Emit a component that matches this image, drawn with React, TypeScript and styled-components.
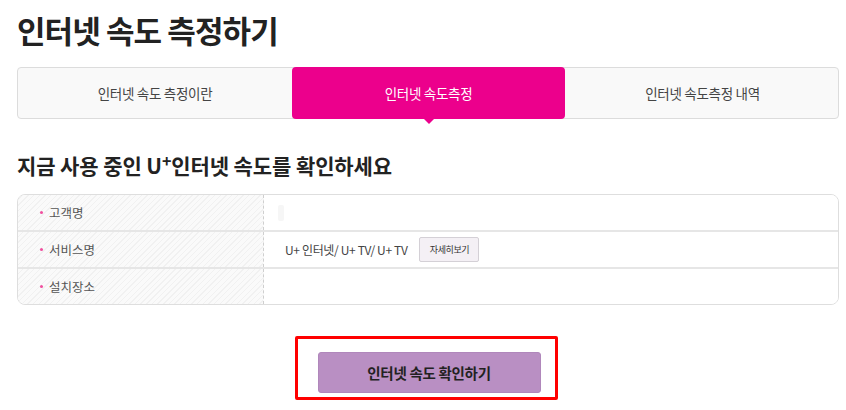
import React from 'react';
import styled, { createGlobalStyle } from 'styled-components';

const GlobalStyle = createGlobalStyle`
  html, body {
    margin: 0;
    padding: 0;
    background: #ffffff;
  }
  body {
    font-family: "Noto Sans CJK KR", "Noto Sans", sans-serif;
    color: #222;
  }
`;

const Page = styled.div`
  width: 822px;
  padding: 8px 7px 0 17px;
`;

const Title = styled.h1`
  margin: 0;
  font-size: 31px;
  line-height: 44px;
  font-weight: 700;
  color: #222;
  letter-spacing: -0.9px;
`;

const TabBar = styled.div`
  display: grid;
  grid-template-columns: 274px 273px 275px;
  margin-top: 15px;
  height: 52px;
  border: 1px solid #dcdcdc;
  border-radius: 4px;
  background: #f9f9f9;
  box-sizing: border-box;
`;

const Tab = styled.div<{ $active?: boolean }>`
  position: relative;
  display: flex;
  align-items: center;
  justify-content: center;
  font-size: 13.5px;
  color: ${(p) => (p.$active ? '#fff' : '#444')};
  background: ${(p) => (p.$active ? '#ec008c' : 'transparent')};
  border-radius: ${(p) => (p.$active ? '4px' : '0')};
  margin: ${(p) => (p.$active ? '-1px 0' : '0')};
  letter-spacing: -0.3px;

  &::after {
    content: '';
    display: ${(p) => (p.$active ? 'block' : 'none')};
    position: absolute;
    left: 50%;
    bottom: -5px;
    margin-left: -6px;
    border-left: 6px solid transparent;
    border-right: 6px solid transparent;
    border-top: 6px solid #ec008c;
  }
`;

const SubTitle = styled.h2`
  margin: 31px 0 0;
  font-size: 21px;
  line-height: 30px;
  font-weight: 700;
  color: #222;
  letter-spacing: -0.1px;

  sup {
    font-size: 16px;
    vertical-align: 7px;
    line-height: 0;
  }
`;

const InfoTable = styled.div`
  margin-top: 14px;
  border: 1px solid #dedede;
  border-radius: 8px;
  overflow: hidden;
`;

const Row = styled.div`
  display: grid;
  grid-template-columns: 246px 1fr;
  height: 35px;
  & + & {
    border-top: 2px solid #e6e6e6;
  }
`;

const Label = styled.div`
  display: flex;
  align-items: center;
  padding-left: 22px;
  font-size: 12.5px;
  color: #555;
  border-right: 1px dashed #cfcfcf;
  background: repeating-linear-gradient(
    135deg,
    #fafafa 0,
    #fafafa 3px,
    #f1f1f1 3px,
    #f1f1f1 4px
  );

  &::before {
    content: '';
    width: 3px;
    height: 3px;
    border-radius: 50%;
    background: #f0509f;
    margin-right: 6px;
  }
`;

const Value = styled.div`
  display: flex;
  align-items: center;
  padding-left: 21px;
  font-size: 12px;
  color: #444;
  background: #fff;
  letter-spacing: -0.35px;
`;

const Blurred = styled.div`
  width: 6px;
  height: 16px;
  margin-left: -7px;
  border-radius: 2px;
  background: #f6f6f6;
`;

const SmallButton = styled.button`
  margin-left: 12px;
  height: 25px;
  width: 60px;
  padding: 0;
  font-family: inherit;
  font-size: 9px;
  letter-spacing: -0.4px;
  color: #333;
  background: #f4f0f5;
  border: 1px solid #d4d0d6;
  border-radius: 2px;
`;

const Actions = styled.div`
  display: flex;
  justify-content: center;
  margin-top: 31px;
  padding-right: 4px;
`;

const Highlight = styled.div`
  border: 3px solid #ff0000;
  border-radius: 2px;
  padding: 13px 14px 4px 20px;
`;

const PrimaryButton = styled.button`
  width: 223px;
  height: 41px;
  font-family: inherit;
  font-size: 14.5px;
  font-weight: 700;
  color: #222;
  background: #b98fc3;
  border: 1px solid #b087bb;
  border-radius: 3px;
  letter-spacing: -0.3px;
`;

export default function App() {
  return (
    <Page>
      <GlobalStyle />
      <Title>인터넷 속도 측정하기</Title>
      <TabBar>
        <Tab>인터넷 속도 측정이란</Tab>
        <Tab $active>인터넷 속도측정</Tab>
        <Tab>인터넷 속도측정 내역</Tab>
      </TabBar>
      <SubTitle>
        지금 사용 중인 U<sup>+</sup>인터넷 속도를 확인하세요
      </SubTitle>
      <InfoTable>
        <Row>
          <Label>고객명</Label>
          <Value>
            <Blurred />
          </Value>
        </Row>
        <Row>
          <Label>서비스명</Label>
          <Value>
            U+ 인터넷/ U+ TV/ U+ TV
            <SmallButton type="button">자세히보기</SmallButton>
          </Value>
        </Row>
        <Row>
          <Label>설치장소</Label>
          <Value />
        </Row>
      </InfoTable>
      <Actions>
        <Highlight>
          <PrimaryButton type="button">인터넷 속도 확인하기</PrimaryButton>
        </Highlight>
      </Actions>
    </Page>
  );
}
